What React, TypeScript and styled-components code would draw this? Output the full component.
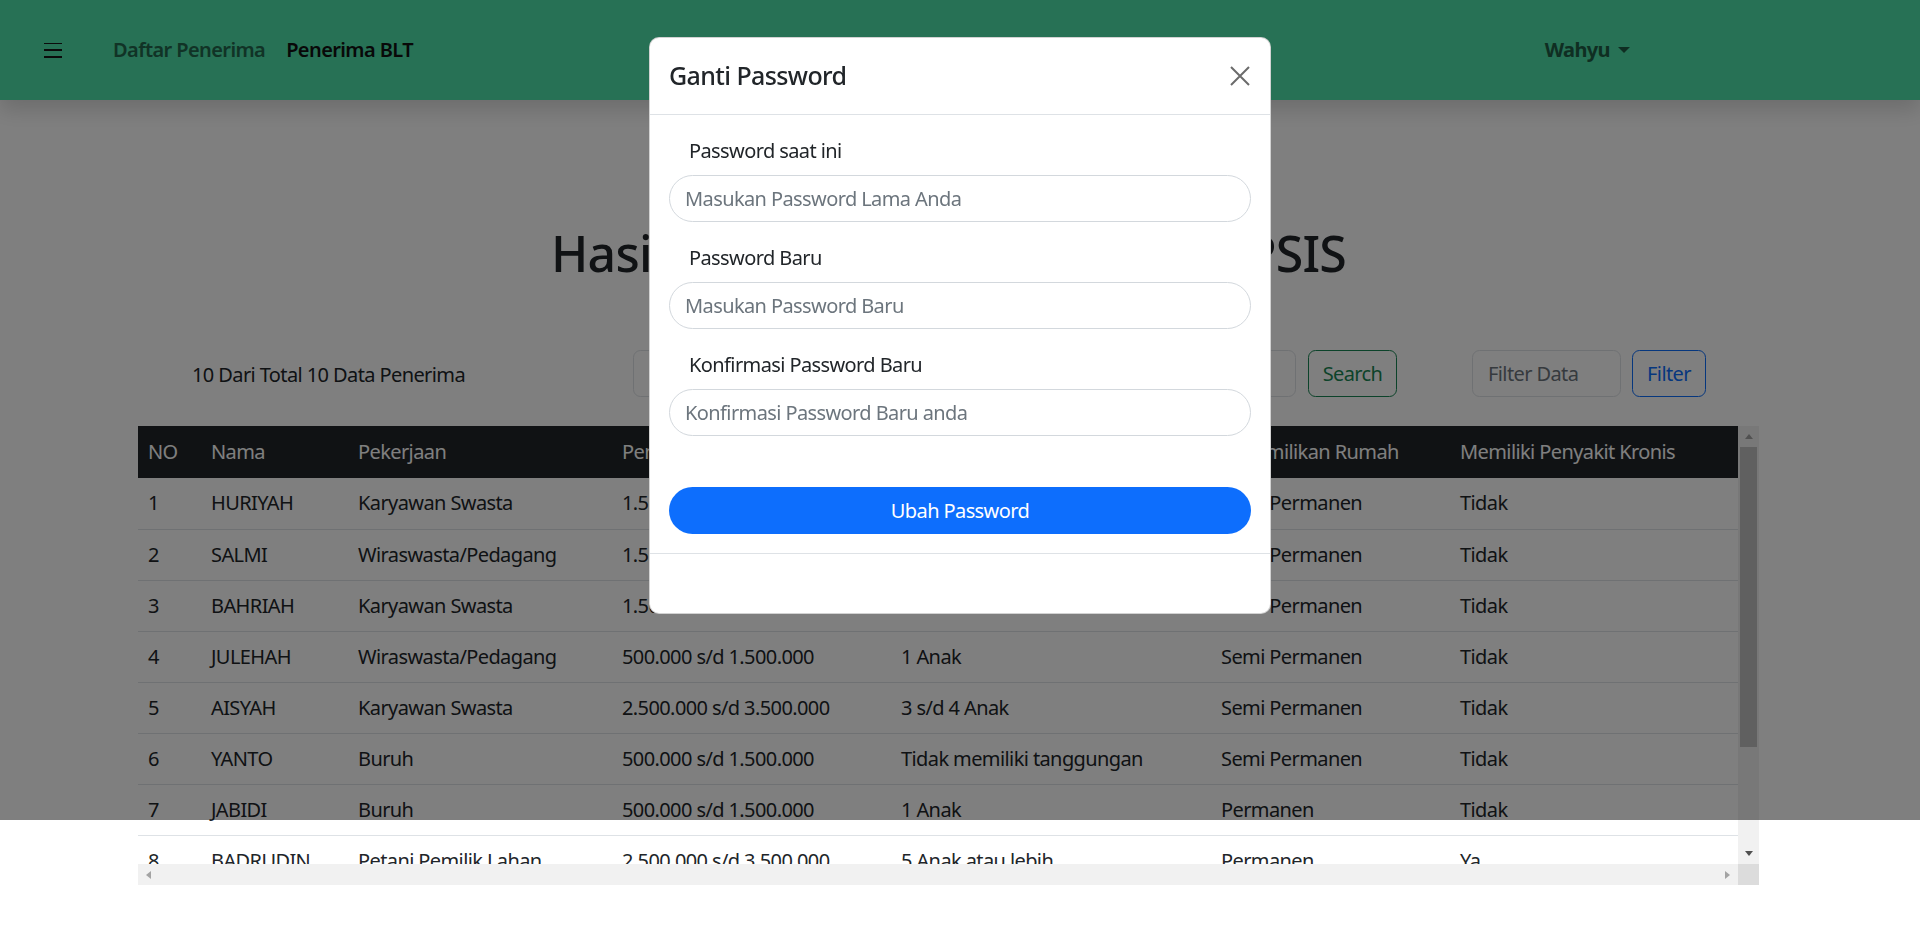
import React from 'react';
import styled, {createGlobalStyle, css} from 'styled-components';

const rows = [
  ['1', 'HURIYAH', 'Karyawan Swasta', '1.500.000 s/d 2.500.000', '2 Anak', 'Semi Permanen', 'Tidak'],
  ['2', 'SALMI', 'Wiraswasta/Pedagang', '1.500.000 s/d 2.500.000', '1 Anak', 'Semi Permanen', 'Tidak'],
  ['3', 'BAHRIAH', 'Karyawan Swasta', '1.500.000 s/d 2.500.000', '2 Anak', 'Semi Permanen', 'Tidak'],
  ['4', 'JULEHAH', 'Wiraswasta/Pedagang', '500.000 s/d 1.500.000', '1 Anak', 'Semi Permanen', 'Tidak'],
  ['5', 'AISYAH', 'Karyawan Swasta', '2.500.000 s/d 3.500.000', '3 s/d 4 Anak', 'Semi Permanen', 'Tidak'],
  ['6', 'YANTO', 'Buruh', '500.000 s/d 1.500.000', 'Tidak memiliki tanggungan', 'Semi Permanen', 'Tidak'],
  ['7', 'JABIDI', 'Buruh', '500.000 s/d 1.500.000', '1 Anak', 'Permanen', 'Tidak'],
  ['8', 'BADRUDIN', 'Petani Pemilik Lahan', '2.500.000 s/d 3.500.000', '5 Anak atau lebih', 'Permanen', 'Ya'],
  ['9', 'MARYAM', 'Buruh', '500.000 s/d 1.500.000', '2 Anak', 'Semi Permanen', 'Tidak'],
  ['10', 'SUPRIADI', 'Petani Penggarap', '500.000 s/d 1.500.000', '3 s/d 4 Anak', 'Semi Permanen', 'Tidak'],
];

const columns = [
  {label: 'NO', width: 63},
  {label: 'Nama', width: 147},
  {label: 'Pekerjaan', width: 264},
  {label: 'Penghasilan', width: 279},
  {label: 'Jumlah Tanggungan', width: 320},
  {label: 'Kepemilikan Rumah', width: 239},
  {label: 'Memiliki Penyakit Kronis', width: 0},
];

function App() {
  return (
    <>
      <GlobalStyle />
      <Navbar>
        <Toggler aria-label="menu">
          <span /><span /><span />
        </Toggler>
        <NavLink>Daftar Penerima</NavLink>
        <Brand>Penerima BLT</Brand>
        <UserMenu>Wahyu</UserMenu>
      </Navbar>

      <Main>
        <Title>Hasil Perhitungan Metode TOPSIS</Title>
        <Toolbar>
          <Info>10 Dari Total 10 Data Penerima</Info>
          <SearchGroup>
            <Field placeholder="Cari Nama Penerima" />
            <OutlineButton $color="#198754" $width={89}>Search</OutlineButton>
          </SearchGroup>
          <FilterGroup>
            <Field placeholder="Filter Data" />
            <OutlineButton $color="#0d6efd" $width={74}>Filter</OutlineButton>
          </FilterGroup>
        </Toolbar>

        <TableFrame>
          <TableViewport>
            <Table>
              <colgroup>
                {columns.map(c => <col key={c.label} style={c.width ? {width: c.width} : undefined} />)}
              </colgroup>
              <thead>
                <tr>{columns.map(c => <Th key={c.label}>{c.label}</Th>)}</tr>
              </thead>
              <tbody>
                {rows.map(r => (
                  <tr key={r[0]}>{r.map((v, i) => <Td key={i}>{v}</Td>)}</tr>
                ))}
              </tbody>
            </Table>
          </TableViewport>
          <VScroll>
            <ScrollButton><Arrow $dir="up" /></ScrollButton>
            <Thumb />
            <Track />
            <ScrollButton><Arrow $dir="down" $active /></ScrollButton>
          </VScroll>
          <HScroll>
            <ScrollButton><Arrow $dir="left" /></ScrollButton>
            <ScrollButton><Arrow $dir="right" /></ScrollButton>
          </HScroll>
          <Corner />
        </TableFrame>
      </Main>

      <Backdrop />
      <ModalLayer>
        <Modal>
          <ModalHeader>
            <ModalTitle>Ganti Password</ModalTitle>
            <CloseButton aria-label="close">
              <svg width="22" height="22" viewBox="0 0 22 22">
                <path d="M2 2 L20 20 M20 2 L2 20" stroke="#6b6b6b" strokeWidth="2" fill="none" />
              </svg>
            </CloseButton>
          </ModalHeader>
          <ModalBody>
            <FormGroup>
              <Label>Password saat ini</Label>
              <PillInput type="password" placeholder="Masukan Password Lama Anda" />
            </FormGroup>
            <FormGroup>
              <Label>Password Baru</Label>
              <PillInput type="password" placeholder="Masukan Password Baru" />
            </FormGroup>
            <FormGroup>
              <Label>Konfirmasi Password Baru</Label>
              <PillInput type="password" placeholder="Konfirmasi Password Baru anda" />
            </FormGroup>
            <SubmitButton>Ubah Password</SubmitButton>
          </ModalBody>
          <ModalFooter />
        </Modal>
      </ModalLayer>
    </>
  );
}

const GlobalStyle = createGlobalStyle`
  * {
    box-sizing: border-box;
  }
  body {
    margin: 0;
    background: #fff;
    color: #212529;
    font-family: 'Segoe UI', 'Noto Sans', sans-serif;
    font-size: 20px;
    line-height: 1.5;
    letter-spacing: -0.6px;
  }
  input, button {
    letter-spacing: inherit;
  }
`;

const Navbar = styled.nav`
  position: relative;
  height: 100px;
  display: flex;
  align-items: center;
  padding: 0 290px 0 44px;
  background: #4ee2aa;
  box-shadow: 0 10px 20px rgba(0, 0, 0, 0.15);
  font-weight: 600;
`;

const Toggler = styled.button`
  width: 18px;
  height: 15px;
  padding: 0;
  border: 0;
  background: none;
  display: flex;
  flex-direction: column;
  justify-content: space-between;
  margin-right: 51px;
  span {
    display: block;
    height: 1.6px;
    background: #161616;
  }
`;

const NavLink = styled.a`
  color: #23664d;
  margin-right: 21px;
`;

const Brand = styled.a`
  color: #111;
`;

const UserMenu = styled.a`
  margin-left: auto;
  color: #1f5c45;
  font-weight: 700;
  display: flex;
  align-items: center;
  &::after {
    content: '';
    margin-left: 8px;
    border-top: 6px solid #1f5c45;
    border-left: 6px solid transparent;
    border-right: 6px solid transparent;
  }
`;

const Main = styled.main`
  width: 1621px;
  margin-left: 138px;
`;

const Title = styled.h1`
  margin: 123px 0 0;
  text-align: center;
  font-size: 50px;
  font-weight: 500;
  line-height: 60px;
  letter-spacing: -0.8px;
  word-spacing: 4px;
`;

const Toolbar = styled.div`
  display: flex;
  align-items: center;
  margin-top: 67px;
  height: 47px;
`;

const Info = styled.div`
  width: 495px;
  padding-left: 54px;
  padding-top: 2px;
`;

const SearchGroup = styled.div`
  width: 764px;
  display: flex;
  gap: 12px;
`;

const FilterGroup = styled.div`
  margin-left: 75px;
  display: flex;
  gap: 11px;
  input {
    width: 149px;
  }
`;

const Field = styled.input`
  flex: 1;
  min-width: 0;
  height: 47px;
  padding: 0 15px;
  border: 1px solid #dee2e6;
  border-radius: 7.5px;
  font: inherit;
  color: #212529;
  &::placeholder {
    color: #6c757d;
  }
`;

const OutlineButton = styled.button<{$color: string; $width: number}>`
  width: ${p => p.$width}px;
  height: 47px;
  border: 1px solid ${p => p.$color};
  border-radius: 7.5px;
  background: transparent;
  color: ${p => p.$color};
  font: inherit;
`;

const TableFrame = styled.div`
  margin-top: 29px;
  display: grid;
  grid-template-columns: 1fr 21px;
  grid-template-rows: 438px 21px;
`;

const TableViewport = styled.div`
  overflow: hidden;
`;

const VScroll = styled.div`
  display: flex;
  flex-direction: column;
  background: #f1f1f1;
`;

const HScroll = styled.div`
  display: flex;
  justify-content: space-between;
  background: #f1f1f1;
`;

const Corner = styled.div`
  background: #dcdcdc;
`;

const ScrollButton = styled.div`
  width: 21px;
  height: 21px;
  flex: none;
  display: flex;
  align-items: center;
  justify-content: center;
`;

const Thumb = styled.div`
  height: 300px;
  flex: none;
  margin: 0 2px;
  background: #c1c1c1;
`;

const Track = styled.div`
  flex: 1;
`;

const arrowShapes = {
  up: css<{$active?: boolean}>`
    border-left: 4.5px solid transparent;
    border-right: 4.5px solid transparent;
    border-bottom: 5px solid ${p => (p.$active ? '#505050' : '#a3a3a3')};
  `,
  down: css<{$active?: boolean}>`
    border-left: 4.5px solid transparent;
    border-right: 4.5px solid transparent;
    border-top: 5px solid ${p => (p.$active ? '#505050' : '#a3a3a3')};
  `,
  left: css<{$active?: boolean}>`
    border-top: 4.5px solid transparent;
    border-bottom: 4.5px solid transparent;
    border-right: 5px solid ${p => (p.$active ? '#505050' : '#a3a3a3')};
  `,
  right: css<{$active?: boolean}>`
    border-top: 4.5px solid transparent;
    border-bottom: 4.5px solid transparent;
    border-left: 5px solid ${p => (p.$active ? '#505050' : '#a3a3a3')};
  `,
};

const Arrow = styled.span<{$dir: 'up' | 'down' | 'left' | 'right'; $active?: boolean}>`
  width: 0;
  height: 0;
  ${p => arrowShapes[p.$dir]}
`;

const Table = styled.table`
  width: 100%;
  table-layout: fixed;
  border-collapse: collapse;
`;

const Th = styled.th`
  padding: 10px;
  background: #212529;
  color: #fff;
  font-weight: 400;
  text-align: left;
  white-space: nowrap;
  height: 52px;
`;

const Td = styled.td`
  padding: 10px;
  border-bottom: 1px solid #dee2e6;
  white-space: nowrap;
  height: 51px;
`;

const Backdrop = styled.div`
  position: fixed;
  top: 0;
  left: 0;
  right: 0;
  height: 820px;
  background: rgba(0, 0, 0, 0.5);
`;

const ModalLayer = styled.div`
  position: fixed;
  inset: 0;
  display: flex;
  justify-content: center;
  align-items: flex-start;
  padding-top: 37px;
`;

const Modal = styled.div`
  width: 622px;
  background: #fff;
  border-radius: 10px;
  border: 1px solid rgba(0, 0, 0, 0.175);
  overflow: hidden;
`;

const ModalHeader = styled.div`
  height: 77px;
  display: flex;
  align-items: center;
  justify-content: space-between;
  padding: 0 18px 0 19px;
  border-bottom: 1px solid #dee2e6;
`;

const ModalTitle = styled.h5`
  margin: 0;
  font-size: 25px;
  font-weight: 500;
  line-height: 1.5;
`;

const CloseButton = styled.button`
  width: 24px;
  height: 24px;
  padding: 0;
  border: 0;
  background: none;
  display: flex;
  align-items: center;
  justify-content: center;
`;

const ModalBody = styled.div`
  padding: 0 19px 19px;
`;

const FormGroup = styled.div`
  padding-top: 21px;
`;

const Label = styled.label`
  display: block;
  padding-left: 20px;
  margin-bottom: 9px;
  line-height: 30px;
`;

const PillInput = styled.input`
  width: 100%;
  height: 47px;
  padding: 0 15px;
  border: 1px solid #d3d8dd;
  border-radius: 50px;
  font: inherit;
  &::placeholder {
    color: #6c757d;
  }
`;

const SubmitButton = styled.button`
  width: 100%;
  height: 47px;
  margin-top: 51px;
  border: 0;
  border-radius: 50px;
  background: #0d6efd;
  color: #fff;
  font: inherit;
`;

const ModalFooter = styled.div`
  height: 60px;
  border-top: 1px solid #dee2e6;
`;

export default App;
